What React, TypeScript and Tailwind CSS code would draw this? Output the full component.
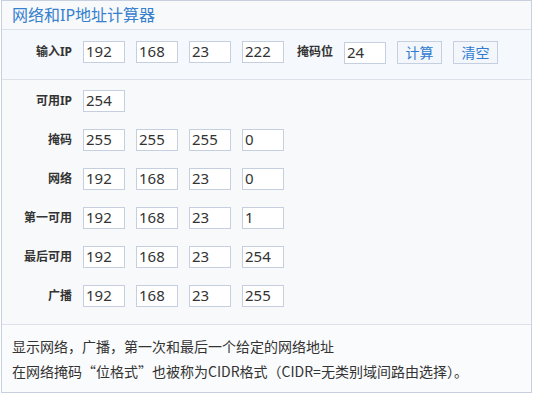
import React from 'react';

const cjk = { fontFamily: '"Noto Sans", "Noto Sans CJK SC", sans-serif' };
const cjkFirst = { fontFamily: '"Noto Sans CJK SC", "Noto Sans", sans-serif' };

const results: { label: string; values: string[] }[] = [
  { label: '可用IP', values: ['254'] },
  { label: '掩码', values: ['255', '255', '255', '0'] },
  { label: '网络', values: ['192', '168', '23', '0'] },
  { label: '第一可用', values: ['192', '168', '23', '1'] },
  { label: '最后可用', values: ['192', '168', '23', '254'] },
  { label: '广播', values: ['192', '168', '23', '255'] },
];

const Box = ({ value }: { value: string }) => (
  <input
    readOnly
    value={value}
    className="w-[42px] h-[22px] border border-[#c6cfe0] bg-white pl-[2px] pb-[2px] text-[15px] leading-none text-[#333] outline-none"
    style={cjk}
  />
);

const Label = ({ children }: { children: React.ReactNode }) => (
  <span className="w-[70px] shrink-0 text-right text-[12px] font-bold text-[#333]">{children}</span>
);

const App = () => {
  return (
    <div className="ml-px w-[531px] h-[393px] border border-[#c8cfde] bg-[#f8f9fa] flex flex-col" style={cjk}>
      {/* Title */}
      <div className="h-[29px] shrink-0 border-b border-[#dde2ea] bg-[#f8f9fa] pl-[10px] flex items-center text-[16px] text-[#3580cf]">
        网络和IP地址计算器
      </div>

      {/* Input row */}
      <div className="h-[50px] shrink-0 border-b border-[#dde2ea] bg-[#f5f8fc] pt-[10px]">
        <div className="flex items-center">
          <Label>输入IP</Label>
          <div className="ml-[11px] flex gap-[11px]">
            <Box value="192" />
            <Box value="168" />
            <Box value="23" />
            <Box value="222" />
          </div>
          <span className="ml-[13px] text-[12px] font-bold text-[#333]">掩码位</span>
          <div className="ml-[11px]">
            <Box value="24" />
          </div>
          <button className="ml-[11px] w-[45px] h-[23px] border border-[#c6cfe0] bg-[#f3f7fc] text-[14px] text-[#2f7bd0]">
            计算
          </button>
          <button className="ml-[11px] w-[45px] h-[23px] border border-[#c6cfe0] bg-[#f3f7fc] text-[14px] text-[#2f7bd0]">
            清空
          </button>
        </div>
      </div>

      {/* Results */}
      <div className="h-[245px] shrink-0 border-b border-[#dde2ea] bg-[#f8f9fa] pt-[10px] flex flex-col gap-[17px]">
        {results.map((row) => (
          <div key={row.label} className="flex items-center">
            <Label>{row.label}</Label>
            <div className="ml-[11px] flex gap-[11px]">
              {row.values.map((v, i) => (
                <Box key={i} value={v} />
              ))}
            </div>
          </div>
        ))}
      </div>

      {/* Notes */}
      <div className="flex-1 bg-[#fafbfc] pl-[10px] pt-[9px] text-[14px] leading-[25px] text-[#333]" style={cjkFirst}>
        <p>显示网络，广播，第一次和最后一个给定的网络地址</p>
        <p>在网络掩码“位格式”也被称为CIDR格式（CIDR=无类别域间路由选择）。</p>
      </div>
    </div>
  );
};

export default App;
